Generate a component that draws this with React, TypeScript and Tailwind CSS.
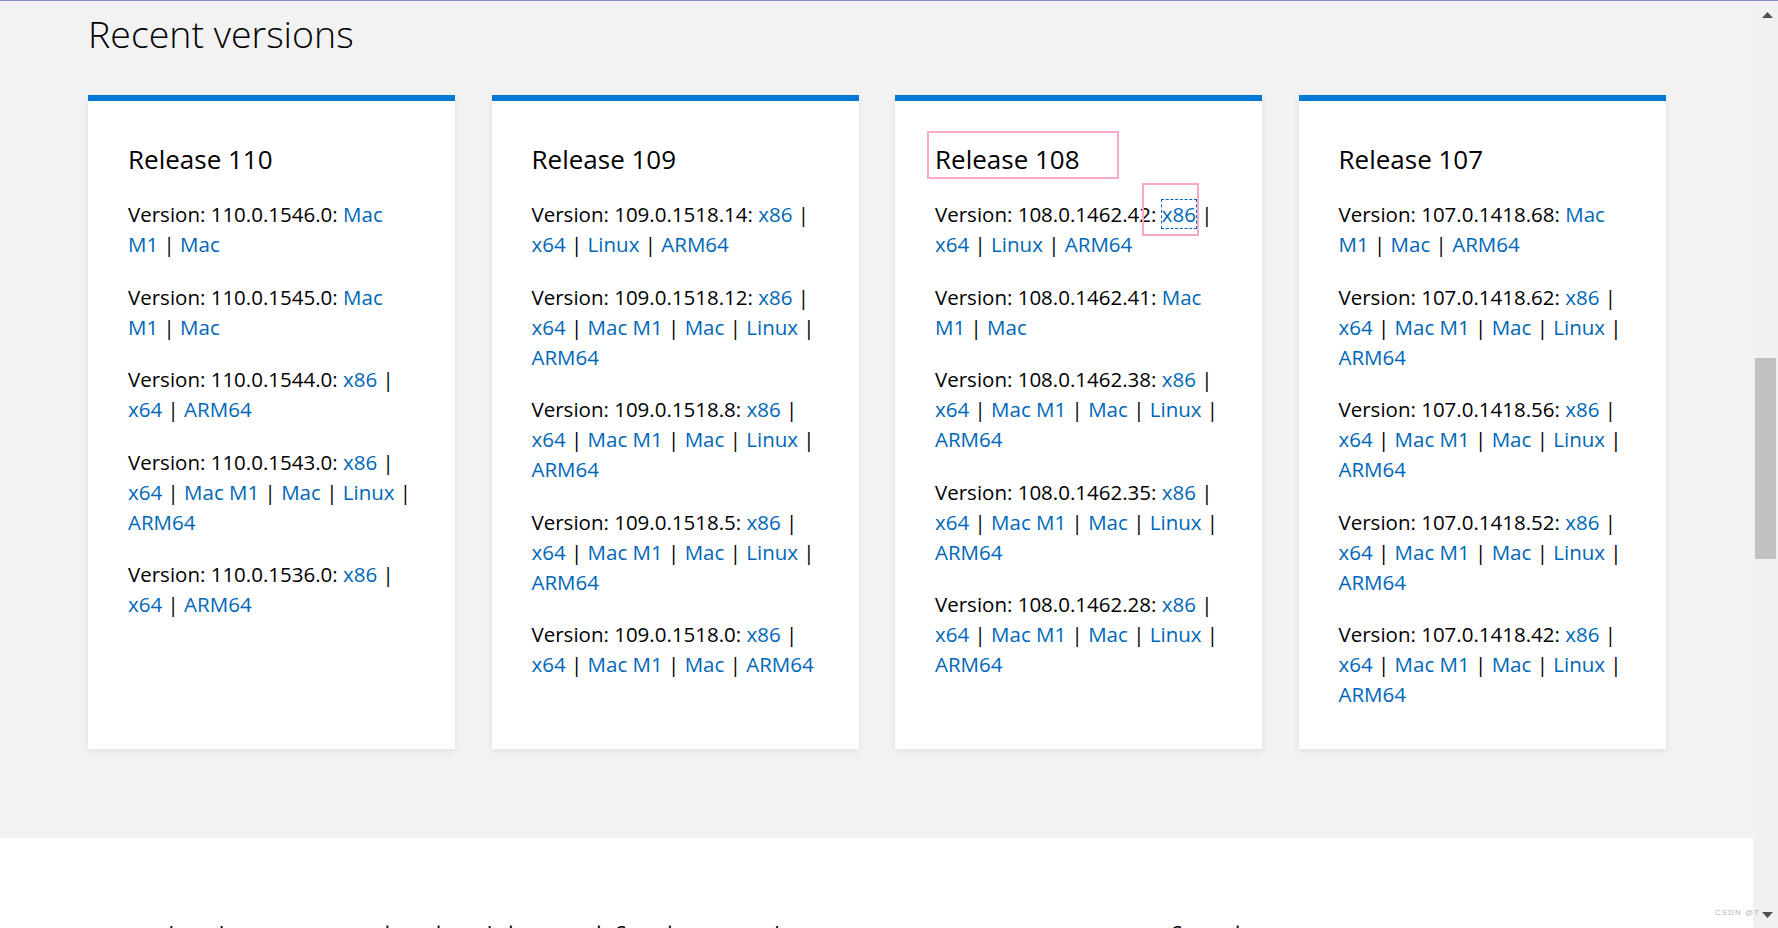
const FULL = ["x86", "x64", "Mac M1", "Mac", "Linux", "ARM64"];

type Version = { num: string; links: string[] };
type Release = { name: string; versions: Version[] };

const releases: Release[] = [
  {
    name: "Release 110",
    versions: [
      { num: "110.0.1546.0", links: ["Mac M1", "Mac"] },
      { num: "110.0.1545.0", links: ["Mac M1", "Mac"] },
      { num: "110.0.1544.0", links: ["x86", "x64", "ARM64"] },
      { num: "110.0.1543.0", links: FULL },
      { num: "110.0.1536.0", links: ["x86", "x64", "ARM64"] },
    ],
  },
  {
    name: "Release 109",
    versions: [
      { num: "109.0.1518.14", links: ["x86", "x64", "Linux", "ARM64"] },
      { num: "109.0.1518.12", links: FULL },
      { num: "109.0.1518.8", links: FULL },
      { num: "109.0.1518.5", links: FULL },
      { num: "109.0.1518.0", links: ["x86", "x64", "Mac M1", "Mac", "ARM64"] },
    ],
  },
  {
    name: "Release 108",
    versions: [
      { num: "108.0.1462.42", links: ["x86", "x64", "Linux", "ARM64"] },
      { num: "108.0.1462.41", links: ["Mac M1", "Mac"] },
      { num: "108.0.1462.38", links: FULL },
      { num: "108.0.1462.35", links: FULL },
      { num: "108.0.1462.28", links: FULL },
    ],
  },
  {
    name: "Release 107",
    versions: [
      { num: "107.0.1418.68", links: ["Mac M1", "Mac", "ARM64"] },
      { num: "107.0.1418.62", links: FULL },
      { num: "107.0.1418.56", links: FULL },
      { num: "107.0.1418.52", links: FULL },
      { num: "107.0.1418.42", links: FULL },
    ],
  },
];

function VersionLine({ version, marked }: { version: Version; marked: boolean }) {
  return (
    <p className="mb-[22.6px] text-[20.5px] leading-[30px] text-black">
      Version: {version.num}:{" "}
      {version.links.map((link, i) => (
        <span key={link}>
          {i > 0 && " | "}
          {marked && i === 0 ? (
            <a className="relative text-[#0067b8] outline outline-1 outline-dashed outline-[#0067b8]">
              {link}
              <span className="pointer-events-none absolute -left-[20px] -top-[17px] -right-[3px] -bottom-[8px] border-2 border-[#f6a9c8]" />
            </a>
          ) : (
            <a className="text-[#0067b8]">{link}</a>
          )}
        </span>
      ))}
    </p>
  );
}

function ReleaseCard({ release, marked }: { release: Release; marked: boolean }) {
  return (
    <div className="bg-white border-t-[6px] border-[#0078d4] px-10 pt-[40px] pb-[17px] shadow-[0_2px_6px_rgba(0,0,0,0.08)]">
      <h3 className="relative mb-[22px] text-[26px] leading-[36px] text-black">
        {release.name}
        {marked && (
          <span className="pointer-events-none absolute -left-[8px] -top-[10px] h-[48px] w-[192px] border-2 border-[#f6a9c8]" />
        )}
      </h3>
      {release.versions.map((v, i) => (
        <VersionLine key={v.num} version={v} marked={marked && i === 0} />
      ))}
    </div>
  );
}

function Scrollbar() {
  return (
    <div className="relative flex w-[25px] shrink-0 flex-col bg-[#f1f1f1]">
      <div className="flex h-[28px] items-start justify-center pt-[11px] pl-[3px]">
        <svg width="11" height="6" viewBox="0 0 11 6">
          <path d="M5.5 0 L11 6 L0 6 Z" fill="#505050" />
        </svg>
      </div>
      <div className="h-[329px]" />
      <div className="ml-[2px] h-[201px] w-[21px] bg-[#c1c1c1]" />
      <div className="flex-1" />
      <div className="flex h-[16px] items-start justify-center pl-[3px] pb-[9px]">
        <svg width="11" height="6" viewBox="0 0 11 6">
          <path d="M0 0 L11 0 L5.5 6 Z" fill="#505050" />
        </svg>
      </div>
    </div>
  );
}

export default function App() {
  return (
    <div className="relative flex h-[928px] w-full overflow-hidden border-t border-[#8a8ac9] bg-[#f2f2f2] font-['Open_Sans','Noto_Sans',sans-serif]">
      <main className="flex min-w-0 flex-1 flex-col">
        <section className="px-[88px] pb-[89px]">
          <h2 className="pt-[9px] text-[37.5px] font-light leading-[48px] text-black">Recent versions</h2>
          <div className="mt-[37px] grid grid-cols-[repeat(4,367px)] gap-x-[36.5px]">
            {releases.map((r) => (
              <ReleaseCard key={r.name} release={r} marked={r.name === "Release 108"} />
            ))}
          </div>
        </section>
        <section className="flex-1 bg-white px-[88px] pt-[79px]">
          <h2 className="whitespace-nowrap text-[36px] font-light leading-[48px] text-black">
            Get the latest Insider builds and find out what is coming to Microsoft Edge
          </h2>
        </section>
      </main>
      <Scrollbar />
      <span className="absolute bottom-[9px] right-[18px] text-[8px] tracking-[1px] text-[#b4b4b4] font-['Liberation_Sans',sans-serif]">
        CSDN @T
      </span>
    </div>
  );
}
